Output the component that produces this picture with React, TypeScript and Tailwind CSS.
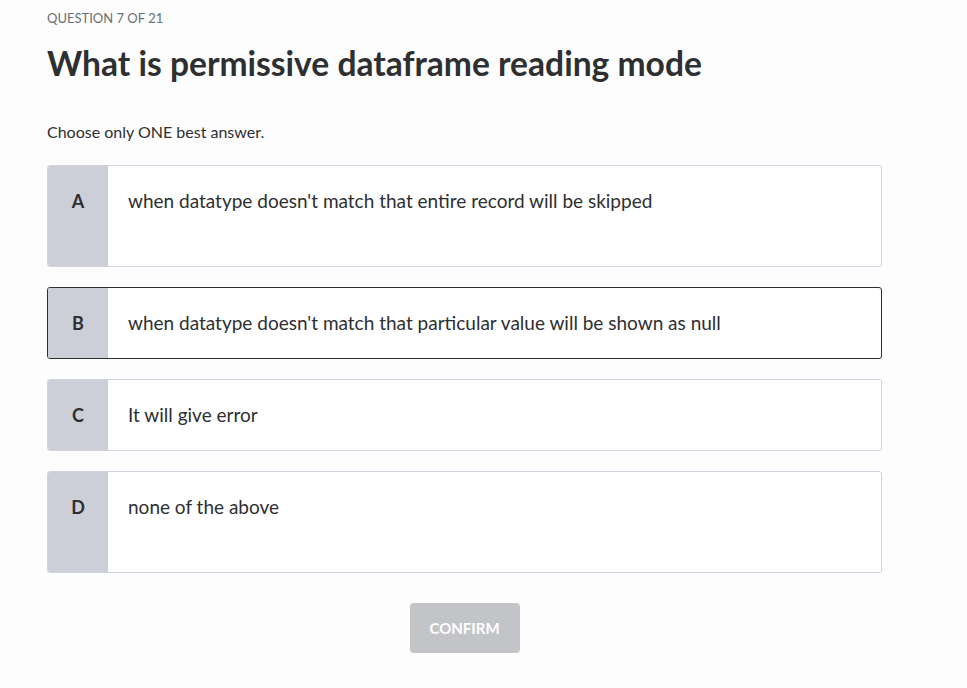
import React from 'react';

interface Option {
  key: string;
  text: string;
  tall?: boolean;
  selected?: boolean;
}

const options: Option[] = [
  { key: 'A', text: "when datatype doesn't match that entire record will be skipped", tall: true },
  { key: 'B', text: "when datatype doesn't match that particular value will be shown as null", selected: true },
  { key: 'C', text: 'It will give error' },
  { key: 'D', text: 'none of the above', tall: true },
];

export default function App() {
  return (
    <div className="min-h-[688px] w-full bg-[#fdfdfd] font-['Lato',sans-serif] text-[#2d2f31]">
      <div className="w-[835px] pl-[47px] box-content pt-[10px]">
        <div className="text-[13px] leading-[16px] uppercase text-[#6a6f73]">Question 7 of 21</div>
        <h1 className="mt-[17px] text-[33.6px] leading-[40px] font-bold text-[#2d2f31]">
          What is permissive dataframe reading mode
        </h1>
        <p className="mt-[39px] text-[16px] leading-[20px] text-[#2d2f31]">Choose only ONE best answer.</p>

        <div className="mt-[23px] flex flex-col gap-[20px]">
          {options.map((o) => (
            <div
              key={o.key}
              className={`flex overflow-hidden rounded-[3px] border bg-white ${
                o.selected ? 'border-[#2d2f31]' : 'border-[#d1d2e0]'
              } ${o.tall ? 'h-[102px]' : 'h-[72px]'}`}
            >
              <div className="w-[60px] shrink-0 bg-[#cdcfd8] pt-[21px] text-center text-[18px] leading-[28px] font-bold">
                {o.key}
              </div>
              <div className="pl-[20px] pt-[21px] text-[19px] leading-[28px]">{o.text}</div>
            </div>
          ))}
        </div>

        <div className="mt-[30px] flex justify-center">
          <button className="h-[50px] w-[110px] rounded-[4px] bg-[#c3c4c8] text-[15px] font-bold text-white">
            CONFIRM
          </button>
        </div>
      </div>
    </div>
  );
}
